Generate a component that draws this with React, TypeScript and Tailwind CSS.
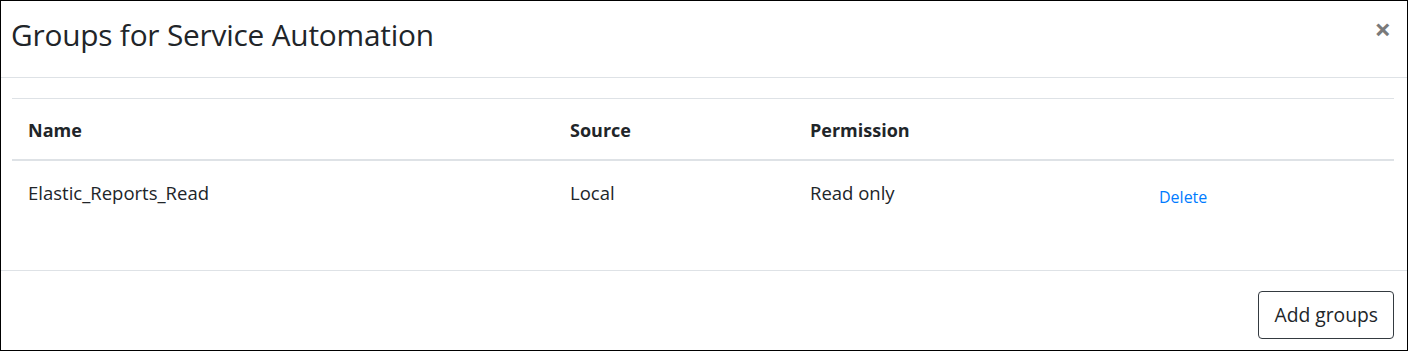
export default function App() {
  const rows = [{ name: "Elastic_Reports_Read", source: "Local", permission: "Read only" }];

  return (
    <div className="w-[1408px] h-[351px] bg-white border border-black flex flex-col text-[#212529] [font-family:'Open_Sans',sans-serif]">
      {/* Header */}
      <div className="h-[77px] shrink-0 flex items-start justify-between border-b border-[#dee2e6] pl-[10px] pr-[16px]">
        <h4 className="mt-[14px] text-[29.8px] leading-[40px] font-medium tracking-[-0.2px]">Groups for Service Automation</h4>
        <button className="mt-[15px] text-[29px] leading-[26px] font-bold text-[#7a7a7a]">×</button>
      </div>

      {/* Body */}
      <div className="h-[192px] shrink-0 px-[11px] pt-[20px]">
        <table className="w-[1382px] border-collapse table-fixed">
          <colgroup>
            <col className="w-[542px]" />
            <col className="w-[240px]" />
            <col className="w-[349px]" />
            <col className="w-[251px]" />
          </colgroup>
          <thead>
            <tr className="h-[61px] border-t border-[#dee2e6] border-b-2">
              <th className="text-left pl-4 pt-[3px] text-[18px] font-bold">Name</th>
              <th className="text-left pl-4 pt-[3px] text-[18px] font-bold">Source</th>
              <th className="text-left pl-4 pt-[3px] text-[18px] font-bold">Permission</th>
              <th></th>
            </tr>
          </thead>
          <tbody>
            {rows.map((r) => (
              <tr key={r.name} className="h-[62px] border-t-2 border-[#dee2e6]">
                <td className="pl-4 text-[18.5px] align-top pt-[18px]">{r.name}</td>
                <td className="pl-4 text-[18.5px] align-top pt-[18px]">{r.source}</td>
                <td className="pl-4 text-[18.5px] align-top pt-[18px]">{r.permission}</td>
                <td className="pl-4 align-top pt-[24px]">
                  <a className="text-[16px] text-[#007bff] cursor-pointer">Delete</a>
                </td>
              </tr>
            ))}
          </tbody>
        </table>
      </div>

      {/* Footer */}
      <div className="flex-1 border-t border-[#dee2e6] flex justify-end items-start pt-[20px] pr-[13px]">
        <button className="h-[48px] px-[15px] rounded-[4px] border border-[#343a40] text-[19.3px] text-[#212529] bg-white">
          Add groups
        </button>
      </div>
    </div>
  );
}
